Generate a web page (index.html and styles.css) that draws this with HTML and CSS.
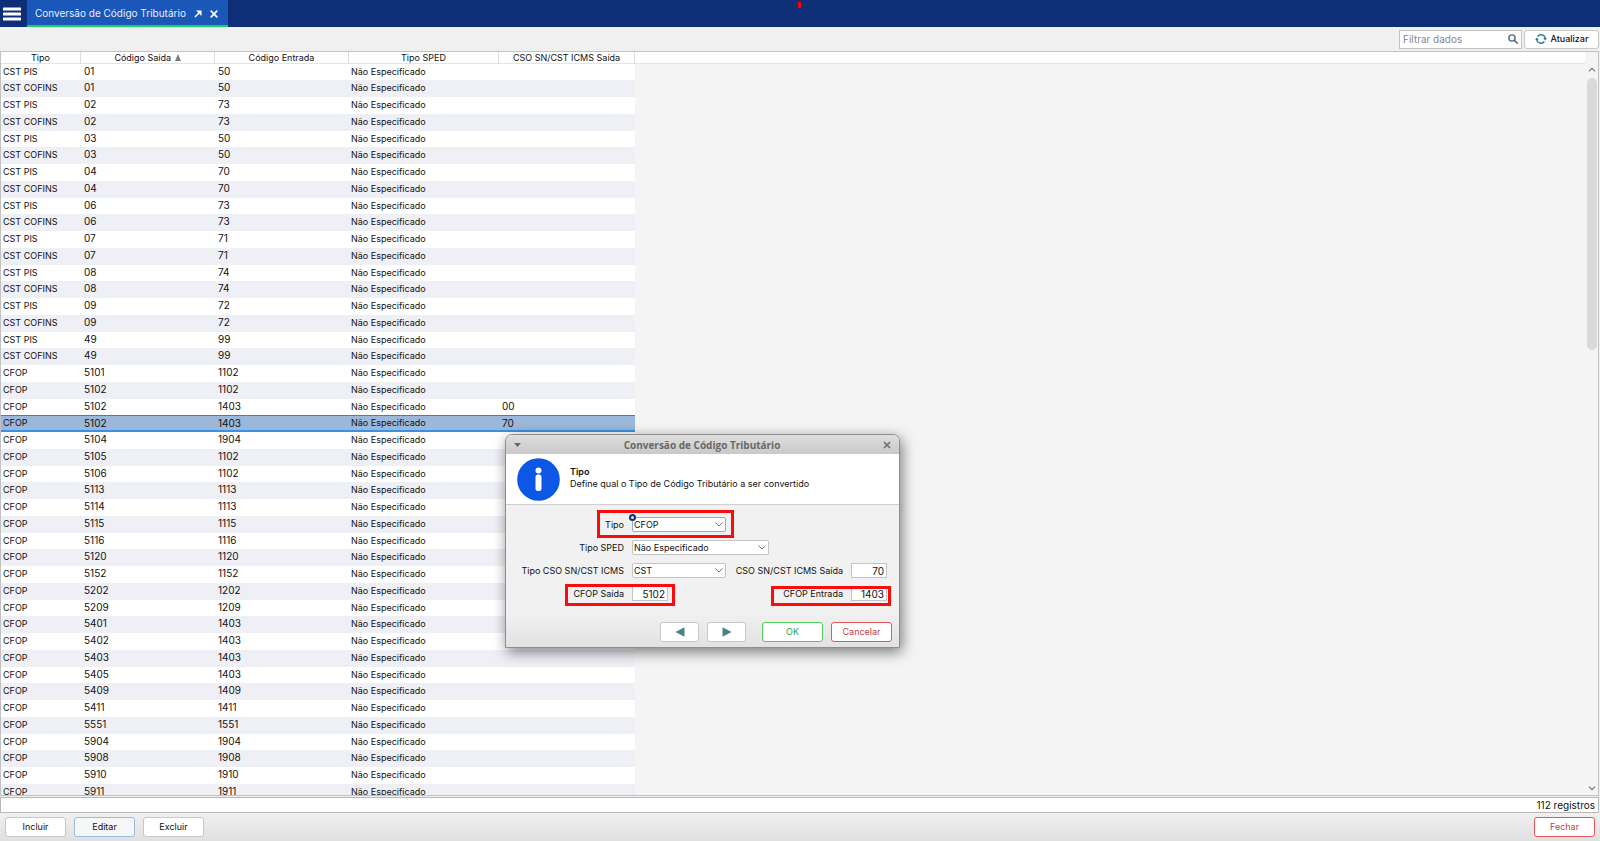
FILE: index.html
```html
<!DOCTYPE html>
<html lang="pt-BR">
<head>
<meta charset="utf-8">
<title>Conversão de Código Tributário</title>
<link rel="stylesheet" href="styles.css">
</head>
<body>
<header class="topbar">
  <button class="menu" aria-label="Menu"><svg width="18" height="14" viewBox="0 0 18 14"><path d="M1 2h16M1 7h16M1 12h16" stroke="#fff" stroke-width="3" stroke-linecap="round"/></svg></button>
  <div class="tab">
    <span class="tab-title">Conversão de Código Tributário</span>
    <button class="tab-btn" aria-label="Destacar"><svg width="8" height="8" viewBox="0 0 8 8"><path d="M1 7L5 3" stroke="#fff" stroke-width="1.5"/><path d="M2 .5h5.5V6z" fill="#fff"/></svg></button>
    <button class="tab-btn" aria-label="Fechar aba"><svg width="8" height="8" viewBox="0 0 8 8"><path d="M.7.7l6.6 6.6M7.3.7L.7 7.3" stroke="#fff" stroke-width="1.7"/></svg></button>
  </div>
  <span class="mark"></span>
</header>

<div class="toolbar">
  <label class="search">
    <input type="text" placeholder="Filtrar dados" aria-label="Filtrar dados">
    <svg width="10" height="10" viewBox="0 0 10 10"><circle cx="4" cy="4" r="3.1" fill="none" stroke="#4d6a86" stroke-width="1.4"/><path d="M6.4 6.4L9.2 9.2" stroke="#4d6a86" stroke-width="1.6" stroke-linecap="round"/></svg>
  </label>
  <button class="btn refresh"><svg width="12" height="12" viewBox="0 0 12 12"><path d="M2.600 3.500A4.300 4.300 0 0 1 10.300 5.500M9.400 8.500A4.300 4.300 0 0 1 1.700 6.500" fill="none" stroke="#2a7a8c" stroke-width="1.4"/><path d="M8.200 5h3.700l-1.700 2.500zM.1 7h3.700L1.800 4.500z" fill="#2a7a8c"/></svg>Atualizar</button>
</div>

<main class="grid">
  <div class="grid-body">
    <div class="head-fill"></div>
    <table>
      <colgroup><col class="c-tipo"><col class="c-saida"><col class="c-entrada"><col class="c-sped"><col class="c-cso"></colgroup>
      <thead><tr><th>Tipo</th><th>Código Saída <svg width="6" height="7" viewBox="0 0 6 7"><path d="M3 0l3 7H0z" fill="#7c7c7c"/></svg></th><th>Código Entrada</th><th>Tipo SPED</th><th>CSO SN/CST ICMS Saída</th></tr></thead>
      <tbody id="rows"></tbody>
    </table>
  </div>
  <div class="scroll">
    <svg width="8" height="5" viewBox="0 0 8 5"><path d="M1 4.3L4 1.3l3 3" fill="none" stroke="#777" stroke-width="1.2"/></svg>
    <div class="track"><div class="thumb"></div></div>
    <svg width="8" height="5" viewBox="0 0 8 5"><path d="M1 .7l3 3 3-3" fill="none" stroke="#777" stroke-width="1.2"/></svg>
  </div>
</main>
<div class="status">112 registros</div>
<footer class="actions">
  <button class="btn">Incluir</button>
  <button class="btn focus">Editar</button>
  <button class="btn">Excluir</button>
  <button class="btn danger last">Fechar</button>
</footer>

<section class="dialog" role="dialog" aria-labelledby="dlg-title">
  <div class="dlg-bar">
    <svg width="7" height="4" viewBox="0 0 7 4"><path d="M0 0h7L3.500 4z" fill="#666"/></svg>
    <h1 id="dlg-title">Conversão de Código Tributário</h1>
    <button class="dlg-x" aria-label="Fechar"><svg width="8" height="8" viewBox="0 0 8 8"><path d="M1 1l6 6M7 1L1 7" stroke="#707070" stroke-width="1.7"/></svg></button>
  </div>
  <div class="dlg-info">
    <svg width="43" height="43" viewBox="0 0 43 43"><circle cx="21.500" cy="21.500" r="21.300" fill="#0d57e6"/><circle cx="21.500" cy="12.500" r="3" fill="#fff"/><rect x="18.500" y="16.500" width="6" height="16.500" rx="2.500" fill="#fff"/></svg>
    <div><h2>Tipo</h2><p>Define qual o Tipo de Código Tributário a ser convertido</p></div>
  </div>
  <form class="form">
    <label for="tipo">Tipo</label>
    <span class="sel active"><select id="tipo"><option>CFOP</option></select><svg width="8" height="5" viewBox="0 0 8 5"><path d="M.5.5L4 4 7.500.5" fill="none" stroke="#777"/></svg></span>
    <label for="sped" class="row-start">Tipo SPED</label>
    <span class="sel wide"><select id="sped"><option>Não Especificado</option></select><svg width="8" height="5" viewBox="0 0 8 5"><path d="M.5.5L4 4 7.500.5" fill="none" stroke="#777"/></svg></span>
    <label for="cso" class="row-start">Tipo CSO SN/CST ICMS</label>
    <span class="sel"><select id="cso"><option>CST</option></select><svg width="8" height="5" viewBox="0 0 8 5"><path d="M.5.5L4 4 7.500.5" fill="none" stroke="#777"/></svg></span>
    <label for="icms">CSO SN/CST ICMS Saída</label>
    <input id="icms" type="text" value="70">
    <label for="csaida" class="row-start">CFOP Saída</label>
    <input id="csaida" type="text" value="5102">
    <label for="centrada">CFOP Entrada</label>
    <input id="centrada" type="text" value="1403">
  </form>
  <div class="dlg-actions">
    <button class="btn nav" aria-label="Anterior"><svg width="10" height="10" viewBox="0 0 10 10"><path d="M9.500.3v9.400L.5 5z" fill="#43858a"/></svg></button>
    <button class="btn nav" aria-label="Próximo"><svg width="10" height="10" viewBox="0 0 10 10"><path d="M.5.3v9.400L9.500 5z" fill="#43858a"/></svg></button>
    <button class="btn ok">OK</button>
    <button class="btn danger">Cancelar</button>
  </div>
  <span class="dot"></span>
  <span class="hl hl-tipo"></span>
  <span class="hl hl-saida"></span>
  <span class="hl hl-entrada"></span>
</section>
<script src="rows.js"></script>
</body>
</html>
```

FILE: styles.css
```css
* { box-sizing: border-box; }
body { margin: 0; height: 100vh; display: flex; flex-direction: column; overflow: hidden; background: #f0f0f0; font: 9px/16px Inter, "Liberation Sans", sans-serif; color: #111; }
button, input, select { font: inherit; color: inherit; margin: 0; }
svg { display: block; flex: none; }
.topbar { position: relative; display: flex; height: 27px; flex: none; background: #0f2e78; }
.menu, .tab-btn, .dlg-x { border: 0; background: none; padding: 0; display: grid; place-items: center; }
.menu { width: 27px; padding-right: 4px; }
.tab { display: flex; align-items: center; width: 201px; padding-left: 8px; background: #1a57b8; border-bottom: 2px solid #10d558; color: #e6eefb; }
.tab-title { flex: 1; font-size: 10px; white-space: nowrap; }
.tab-btn { width: 16px; height: 16px; padding-top: 3px; }
.tab-btn:last-child { margin-right: 6px; }
.mark { position: absolute; left: 50%; top: 2px; width: 3px; height: 6px; margin-left: -2px; background: #f00; }

.toolbar { display: flex; justify-content: flex-end; align-items: center; gap: 2px; height: 24px; flex: none; padding-right: 1px; }
.search { position: relative; width: 123px; height: 19px; }
.search input { width: 100%; height: 100%; padding: 0 24px 0 3px; border: 1px solid #c2c2c2; background: #fff; font-size: 10px; }
.search input::placeholder { color: #888; opacity: 1; }
.search svg { position: absolute; right: 4px; top: 4px; }
.btn { display: flex; align-items: center; justify-content: center; height: 20px; padding: 0; border: 1px solid #c8c8c8; border-radius: 3px; background: #fff; }
.refresh { width: 75px; height: 19px; gap: 4px; font-weight: 500; }

.grid { flex: 1; min-height: 0; display: flex; margin-right: 1px; border: 1px solid #c2c2c2; background: #f4f4f4; overflow: hidden; }
.grid-body { position: relative; flex: 1; overflow: hidden; }
.head-fill { position: absolute; left: 0; right: 0; top: 0; height: 12px; background: #fff; border-bottom: 1px solid #e4e4e4; }
table { position: relative; width: 634px; table-layout: fixed; border-collapse: separate; border-spacing: 0; }
.c-tipo { width: 80px; }
.c-saida, .c-entrada { width: 134px; }
.c-sped { width: 150px; }
.c-cso { width: 136px; }
th { height: 12px; padding: 0; line-height: 11px; font-weight: 400; background: #fff; border-right: 1px solid #dcdcdc; border-bottom: 1px solid #e4e4e4; }
th svg { display: inline-block; vertical-align: 0; margin-left: 1px; }
tbody tr { height: 17px; background: #fff; }
tbody tr:nth-child(even) { background: #efeff6; }
tbody tr:nth-child(4n+1) { height: 16px; }
td { padding: 0 0 0 2px; line-height: 15px; vertical-align: top; white-space: nowrap; }
.num { padding-left: 3px; font-size: 10px; }
tbody tr.on { background: #9bb7d9; }
.on td { line-height: 14px; border-top: 1px solid #3384c8; border-bottom: 2px solid #3592e6; }
.scroll { width: 13px; display: flex; flex-direction: column; align-items: center; padding: 15px 0 4px; gap: 6px; }
.track { flex: 1; width: 10px; }
.thumb { width: 10px; height: 272px; border-radius: 5px; background: #dadada; }

.status { flex: none; height: 16px; margin: 1px 1px 0 0; padding-right: 3px; border: 1px solid #b8b8b8; background: #fff; text-align: right; line-height: 15px; font-size: 10px; }
.actions { flex: none; display: flex; gap: 8px; height: 28px; padding: 4px 5px 0; background: linear-gradient(#f0f0f0, #e0e0e0); }
.actions .btn { width: 61px; }
.btn.focus { background: #f5f6f8; border-color: #9dbbdb; }
.btn.danger { color: #c23b46; border-color: #e9535a; }
.btn.ok { color: #35a041; border-color: #4fd05a; }
.last { margin-left: auto; }

.dialog { position: absolute; left: 505px; top: 434px; width: 395px; border: 1px solid #8e8e8e; border-radius: 7px 7px 0 0; background: #f1f1f1; box-shadow: 2px 4px 14px rgba(0,0,0,.5); }
.dlg-bar { display: flex; align-items: center; height: 19px; padding: 0 8px; border-radius: 6px 6px 0 0; background: linear-gradient(#dedede, #c9c9c9); }
.dlg-bar h1 { flex: 1; margin: 0; text-align: center; font: bold 10px/18px "Open Sans", sans-serif; color: #686868; }
.dlg-info { display: flex; align-items: flex-start; gap: 10px; height: 51px; padding: 4px 11px; background: #fff; border-bottom: 1px solid #cfcfcf; }
.dlg-info div { padding-top: 8px; }
.dlg-info h2, .dlg-info p { margin: 0; font-size: 9px; line-height: 12px; }
.dlg-info h2 { font-weight: 600; }
.form { display: grid; grid-template-columns: 118px 94px 109px 36px; column-gap: 8px; grid-auto-rows: 23px; align-items: center; padding-top: 8px; height: 109px; }
.form label { text-align: right; white-space: nowrap; }
.row-start { grid-column: 1; }
.form input { width: 36px; height: 15px; padding: 0 2px; border: 1px solid #c4c4c4; background: #fff; text-align: right; font-size: 10px; }
.sel { position: relative; height: 15px; }
.sel select { display: block; width: 100%; height: 15px; padding: 0 0 0 1px; border: 1px solid #c4c4c4; border-radius: 2px; background: #fff; appearance: none; line-height: 13px; }
.sel.active select { border-color: #86aede; }
.sel svg { position: absolute; right: 3px; top: 5px; }
.wide { width: 137px; }
.dlg-actions { display: flex; justify-content: flex-end; gap: 8px; height: 33px; padding: 8px 7px 4px; background: linear-gradient(#f0f0f0, #e2e2e2); }
.dlg-actions .btn { width: 61px; }
.dlg-actions .nav { width: 39px; }
.ok { margin-left: 8px; }
.dot { position: absolute; left: 123px; top: 79px; width: 7px; height: 7px; border: 2px solid #14336e; border-radius: 50%; background: #dbe7fa; }
.hl { position: absolute; border: 3px solid #fa0c0c; pointer-events: none; }
.hl-tipo { left: 91px; top: 75px; width: 137px; height: 28px; }
.hl-saida { left: 59px; top: 149px; width: 110px; height: 22px; }
.hl-entrada { left: 265px; top: 151px; width: 120px; height: 20px; }
```

FILE: rows.js
```js
const pis = [["01","50"],["02","73"],["03","50"],["04","70"],["06","73"],["07","71"],["08","74"],["09","72"],["49","99"]];
const cfop = "5101 1102,5102 1102,5102 1403 00,5102 1403 70,5104 1904,5105 1102,5106 1102,5113 1113,5114 1113,5115 1115,5116 1116,5120 1120,5152 1152,5202 1202,5209 1209,5401 1403,5402 1403,5403 1403,5405 1403,5409 1409,5411 1411,5551 1551,5904 1904,5908 1908,5910 1910,5911 1911";
const rows = pis.flatMap(([s, e]) => [["CST PIS", s, e], ["CST COFINS", s, e]])
  .concat(cfop.split(",").map(r => ["CFOP", ...r.split(" ")]));
const body = document.getElementById("rows");
for (const [tipo, saida, entrada, cso = ""] of rows) {
  const tr = body.insertRow();
  if (cso === "70") tr.className = "on";
  for (const text of [tipo, saida, entrada, "Não Especificado", cso]) {
    const td = tr.insertCell();
    td.textContent = text;
    if (/^\d/.test(text)) td.className = "num";
  }
}
```
